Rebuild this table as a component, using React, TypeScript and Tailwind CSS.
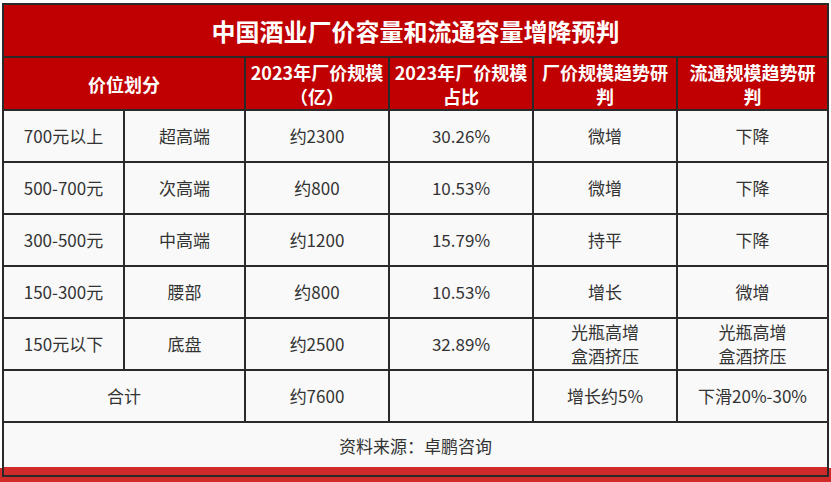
const rows = [
  { range: "700元以上", tier: "超高端", size: "约2300", share: "30.26%", factory: ["微增"], channel: ["下降"] },
  { range: "500-700元", tier: "次高端", size: "约800", share: "10.53%", factory: ["微增"], channel: ["下降"] },
  { range: "300-500元", tier: "中高端", size: "约1200", share: "15.79%", factory: ["持平"], channel: ["下降"] },
  { range: "150-300元", tier: "腰部", size: "约800", share: "10.53%", factory: ["增长"], channel: ["微增"] },
  { range: "150元以下", tier: "底盘", size: "约2500", share: "32.89%", factory: ["光瓶高增", "盒酒挤压"], channel: ["光瓶高增", "盒酒挤压"] },
];

const cell = "border-2 border-[#2a2a2a] text-center align-middle p-0";
const head = `${cell} bg-[#c00000] text-white font-bold text-[18px] leading-[24px]`;
const body = `${cell} bg-[#f9f9f9] text-[#333] text-[17px] leading-[24px] h-[52px]`;

function Lines({ items }: { items: string[] }) {
  return (
    <>
      {items.map((t) => (
        <div key={t}>{t}</div>
      ))}
    </>
  );
}

export default function App() {
  return (
    <div className="w-[831px] h-[482px] overflow-hidden pt-[3px] pl-[2px] bg-[linear-gradient(to_bottom,#ffffff_468px,#d12a2a_468px)] font-['Noto_Sans_CJK_SC','Microsoft_YaHei',sans-serif]">
      <table className="w-[825px] table-fixed border-collapse">
        <colgroup>
          <col className="w-[121px]" />
          <col className="w-[121px]" />
          <col className="w-[144px]" />
          <col className="w-[144px]" />
          <col className="w-[144px]" />
          <col className="w-[151px]" />
        </colgroup>
        <tbody>
          <tr>
            <td colSpan={6} className={`${cell} bg-[#c00000] text-white font-bold text-[24px] h-[53px]`}>
              中国酒业厂价容量和流通容量增降预判
            </td>
          </tr>
          <tr>
            <td colSpan={2} className={`${head} h-[53px]`}>价位划分</td>
            <td className={head}>
              <div className="whitespace-nowrap">2023年厂价规模</div>
              <div>（亿）</div>
            </td>
            <td className={head}>
              <div className="whitespace-nowrap">2023年厂价规模</div>
              <div>占比</div>
            </td>
            <td className={`${head} px-2`}>
              <div>厂价规模趋势研</div>
              <div>判</div>
            </td>
            <td className={`${head} px-2`}>
              <div>流通规模趋势研</div>
              <div>判</div>
            </td>
          </tr>
          {rows.map((r) => (
            <tr key={r.range}>
              <td className={body}>{r.range}</td>
              <td className={body}>{r.tier}</td>
              <td className={body}>{r.size}</td>
              <td className={body}>{r.share}</td>
              <td className={body}>
                <Lines items={r.factory} />
              </td>
              <td className={body}>
                <Lines items={r.channel} />
              </td>
            </tr>
          ))}
          <tr>
            <td colSpan={2} className={body}>合计</td>
            <td className={body}>约7600</td>
            <td className={body}></td>
            <td className={body}>增长约5%</td>
            <td className={body}>下滑20%-30%</td>
          </tr>
          <tr>
            <td
              colSpan={6}
              className={`${cell} h-[54px] text-[#333] text-[17px] align-top pt-[10px] bg-[linear-gradient(to_bottom,#f9f9f9_44px,#d12a2a_44px)]`}
            >
              资料来源：卓鹏咨询
            </td>
          </tr>
        </tbody>
      </table>
    </div>
  );
}
